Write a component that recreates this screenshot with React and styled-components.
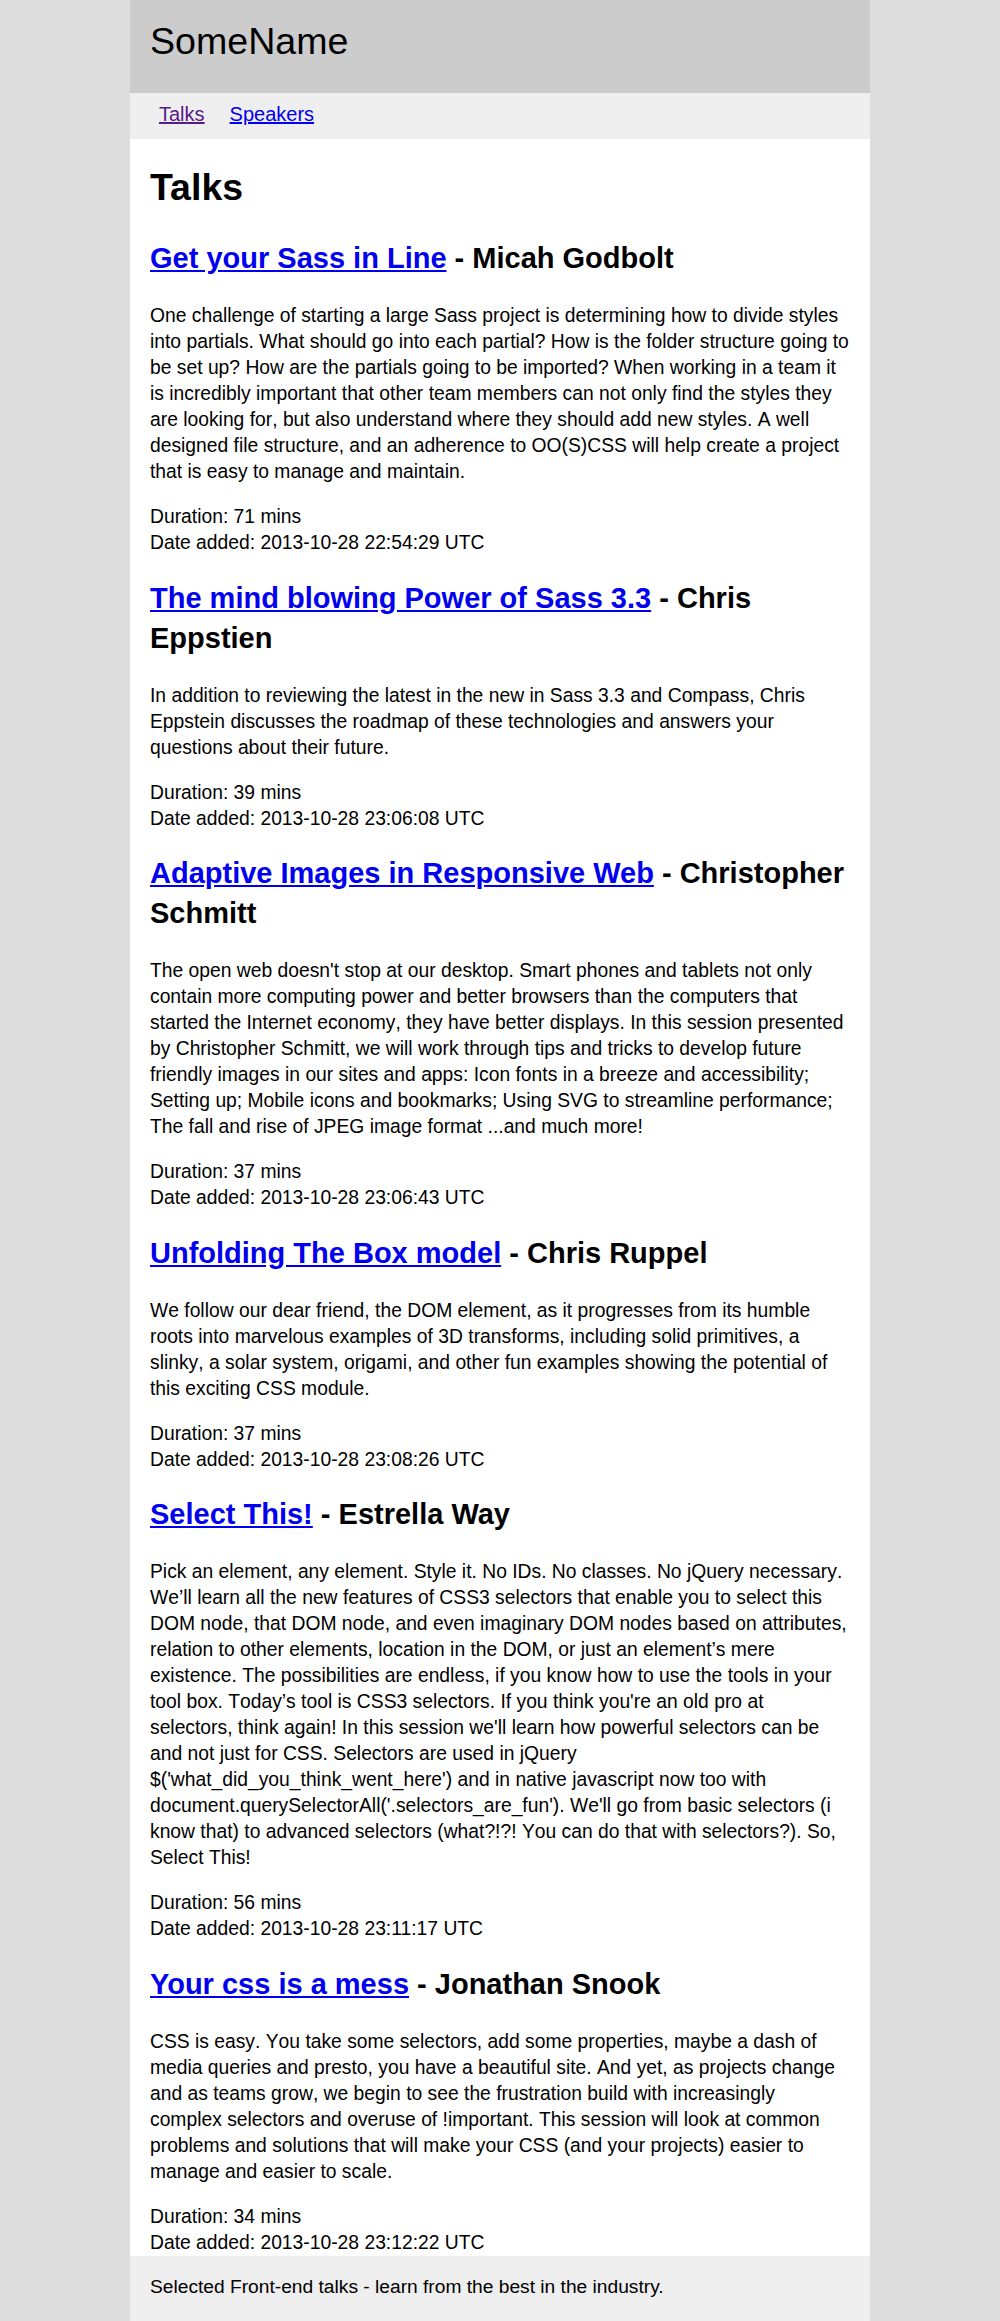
import React from "react";
import styled, { createGlobalStyle } from "styled-components";

const Global = createGlobalStyle`
  html, body {
    margin: 0;
    padding: 0;
    background: #ddd;
  }
  body {
    font-family: "Liberation Sans", Arial, Helvetica, sans-serif;
    font-size: 19.3px;
    line-height: 26px;
    color: #000;
  }
`;

const Page = styled.div`
  max-width: 740px;
  margin: 0 auto;
  background: #fff;
`;

const Header = styled.header`
  background: #ccc;
  padding: 20px 20px 30px;
`;

const SiteName = styled.div`
  font-size: 37.6px;
  line-height: 43px;
  font-weight: normal;
`;

const Nav = styled.nav`
  background: #eee;
  display: flex;
  gap: 25px;
  padding: 8px 29px 12px;
  font-size: 20px;
  line-height: 26px;
`;

const NavLink = styled.a`
  color: ${(p) => (p.$visited ? "#551a8b" : "#0000ee")};
  text-decoration: underline;
`;

const Main = styled.main`
  padding: 0 20px;
  overflow: hidden;
`;

const Title = styled.h1`
  font-size: 37.5px;
  line-height: 52px;
  font-weight: bold;
  margin: 22px 0 25px;
`;

const Article = styled.article`
  &:last-child > p:last-child {
    margin-bottom: 0;
  }
`;

const TalkTitle = styled.h2`
  font-size: 29px;
  line-height: 40px;
  font-weight: bold;
  margin: 21.5px 0 25px;
`;

const TalkLink = styled.a`
  color: #0000ee;
  text-decoration: underline;
`;

const Description = styled.p`
  margin: 19px 0;
  font-kerning: none;
`;

const Meta = styled.p`
  margin: 19px 0;
`;

const Footer = styled.footer`
  background: #eee;
  padding: 18px 20px 22px;
  font-size: 19.2px;
`;

const talks = [
  {
    title: "Get your Sass in Line",
    speaker: "Micah Godbolt",
    desc:
      "One challenge of starting a large Sass project is determining how to divide styles into partials. What should go into each partial? How is the folder structure going to be set up? How are the partials going to be imported? When working in a team it is incredibly important that other team members can not only find the styles they are looking for, but also understand where they should add new styles. A well designed file structure, and an adherence to OO(S)CSS will help create a project that is easy to manage and maintain.",
    duration: 71,
    date: "2013-10-28 22:54:29 UTC",
  },
  {
    title: "The mind blowing Power of Sass 3.3",
    speaker: "Chris Eppstien",
    desc:
      "In addition to reviewing the latest in the new in Sass 3.3 and Compass, Chris Eppstein discusses the roadmap of these technologies and answers your questions about their future.",
    duration: 39,
    date: "2013-10-28 23:06:08 UTC",
  },
  {
    title: "Adaptive Images in Responsive Web",
    speaker: "Christopher Schmitt",
    desc:
      "The open web doesn't stop at our desktop. Smart phones and tablets not only contain more computing power and better browsers than the computers that started the Internet economy, they have better displays. In this session presented by Christopher Schmitt, we will work through tips and tricks to develop future friendly images in our sites and apps: Icon fonts in a breeze and accessibility; Setting up; Mobile icons and bookmarks; Using SVG to streamline performance; The fall and rise of JPEG image format ...and much more!",
    duration: 37,
    date: "2013-10-28 23:06:43 UTC",
  },
  {
    title: "Unfolding The Box model",
    speaker: "Chris Ruppel",
    desc:
      "We follow our dear friend, the DOM element, as it progresses from its humble roots into marvelous examples of 3D transforms, including solid primitives, a slinky, a solar system, origami, and other fun examples showing the potential of this exciting CSS module.",
    duration: 37,
    date: "2013-10-28 23:08:26 UTC",
  },
  {
    title: "Select This!",
    speaker: "Estrella Way",
    desc:
      "Pick an element, any element. Style it. No IDs. No classes. No jQuery necessary. We\u2019ll learn all the new features of CSS3 selectors that enable you to select this DOM node, that DOM node, and even imaginary DOM nodes based on attributes, relation to other elements, location in the DOM, or just an element\u2019s mere existence. The possibilities are endless, if you know how to use the tools in your tool box. Today\u2019s tool is CSS3 selectors. If you think you're an old pro at selectors, think again! In this session we'll learn how powerful selectors can be and not just for CSS. Selectors are used in jQuery $('what_did_you_think_went_here') and in native javascript now too with document.querySelectorAll('.selectors_are_fun'). We'll go from basic selectors (i know that) to advanced selectors (what?!?! You can do that with selectors?). So, Select This!",
    duration: 56,
    date: "2013-10-28 23:11:17 UTC",
  },
  {
    title: "Your css is a mess",
    speaker: "Jonathan Snook",
    desc:
      "CSS is easy. You take some selectors, add some properties, maybe a dash of media queries and presto, you have a beautiful site. And yet, as projects change and as teams grow, we begin to see the frustration build with increasingly complex selectors and overuse of !important. This session will look at common problems and solutions that will make your CSS (and your projects) easier to manage and easier to scale.",
    duration: 34,
    date: "2013-10-28 23:12:22 UTC",
  },
];

export default function App() {
  return (
    <>
      <Global />
      <Page>
        <Header>
          <SiteName>SomeName</SiteName>
        </Header>
        <Nav>
          <NavLink href="#" $visited>
            Talks
          </NavLink>
          <NavLink href="#">Speakers</NavLink>
        </Nav>
        <Main>
          <Title>Talks</Title>
          {talks.map((t) => (
            <Article key={t.title}>
              <TalkTitle>
                <TalkLink href="#">{t.title}</TalkLink> - {t.speaker}
              </TalkTitle>
              <Description>{t.desc}</Description>
              <Meta>
                Duration: {t.duration} mins
                <br />
                Date added: {t.date}
              </Meta>
            </Article>
          ))}
        </Main>
        <Footer>Selected Front-end talks - learn from the best in the industry.</Footer>
      </Page>
    </>
  );
}
